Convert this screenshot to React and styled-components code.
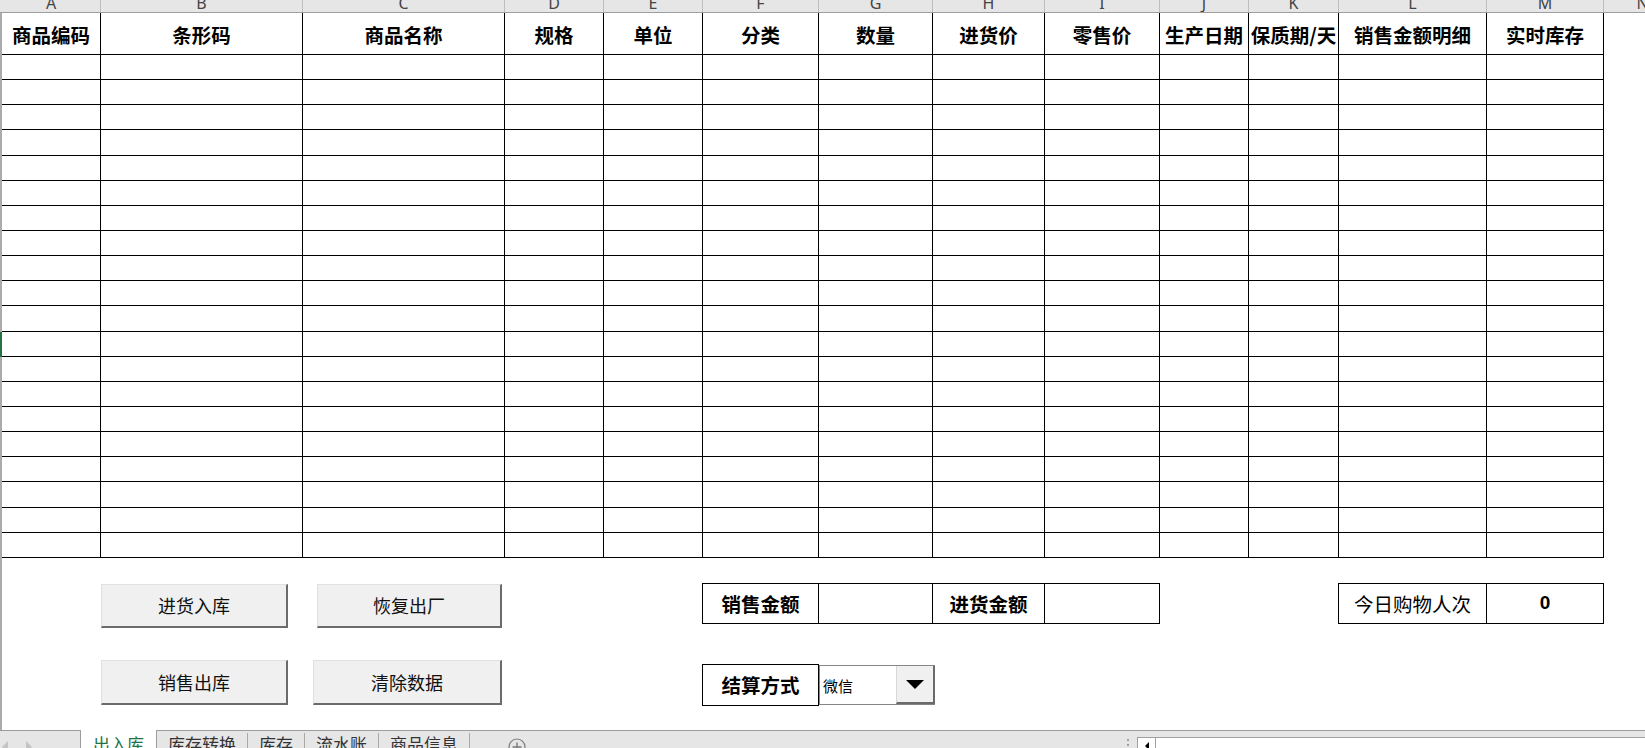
import React from "react"
import styled, { createGlobalStyle, css } from "styled-components"

const GlobalStyle = createGlobalStyle`
  * { box-sizing: border-box; }
  html, body {
    margin: 0;
    padding: 0;
    background: #fff;
  }
  body {
    width: 1645px;
    height: 748px;
    overflow: hidden;
    font-family: "Noto Sans CJK SC", "Noto Sans", sans-serif;
    color: #000;
  }
`

const COLUMNS = [
  { letter: "A", width: 99, title: "商品编码" },
  { letter: "B", width: 202, title: "条形码" },
  { letter: "C", width: 202, title: "商品名称" },
  { letter: "D", width: 99, title: "规格" },
  { letter: "E", width: 99, title: "单位" },
  { letter: "F", width: 116, title: "分类" },
  { letter: "G", width: 114, title: "数量" },
  { letter: "H", width: 112, title: "进货价" },
  { letter: "I", width: 115, title: "零售价" },
  { letter: "J", width: 89, title: "生产日期" },
  { letter: "K", width: 90, title: "保质期/天" },
  { letter: "L", width: 148, title: "销售金额明细" },
  { letter: "M", width: 117, title: "实时库存" },
]

const TEMPLATE = COLUMNS.map((c) => `${c.width}px`).join(" ")
const ROWS = 20
const ACTIVE_ROW = 11

const Page = styled.div`
  display: flex;
  flex-direction: column;
  height: 748px;
  width: 1645px;
`

const ColumnBar = styled.div`
  display: flex;
  height: 13px;
  flex-shrink: 0;
  background: #e6e6e6;
  border-bottom: 1px solid #9e9e9e;
  overflow: hidden;
`

const Corner = styled.div`
  width: 2px;
  flex-shrink: 0;
`

const ColLetter = styled.div`
  width: ${(p) => p.$width}px;
  flex-shrink: 0;
  border-right: 1px solid #bfbfbf;
  text-align: center;
  font-family: "Noto Sans", "Liberation Sans", sans-serif;
  font-size: 16px;
  line-height: 7px;
  color: #444;
`

const Sheet = styled.div`
  flex: 1;
  display: flex;
  flex-direction: column;
  border-left: 2px solid #ababab;
`

const Table = styled.div`
  display: grid;
  grid-template-columns: ${TEMPLATE};
  grid-template-rows: 42px repeat(${ROWS}, 25.15px);
`

const HeadCell = styled.div`
  border-right: 1px solid #000;
  border-bottom: 1px solid #000;
  display: flex;
  align-items: center;
  justify-content: center;
  padding-top: 2px;
  font-size: 19.5px;
  font-weight: 700;
  white-space: nowrap;
  overflow: hidden;
`

const DataCell = styled.div`
  border-right: 1px solid #000;
  border-bottom: 1px solid #000;
  ${(p) =>
    p.$active &&
    css`
      box-shadow: -2px 0 0 #217346;
    `}
`

const Lower = styled.div`
  display: grid;
  grid-template-columns: ${TEMPLATE};
  grid-template-rows: 25px 41px 40px 42px;
`

const ButtonPanel = styled.div`
  grid-column: 2 / 4;
  grid-row: 1 / -1;
  display: grid;
  grid-template-columns: 187px 189px;
  grid-template-rows: 44px 45px;
  column-gap: 25px;
  row-gap: 32px;
  padding-top: 26px;
  align-content: start;
`

const MacroButton = styled.div`
  width: ${(p) => p.$width || 187}px;
  justify-self: end;
  background: #f0f0f0;
  border-top: 1px solid #e0e0e0;
  border-left: 1px solid #e0e0e0;
  border-right: 2px solid #6b6b6b;
  border-bottom: 2px solid #6b6b6b;
  display: flex;
  align-items: center;
  justify-content: center;
  font-size: 18px;
  color: #111;
`

const Box = styled.div`
  grid-column: ${(p) => p.$col};
  grid-row: ${(p) => p.$row};
  border: 1px solid #000;
  border-left-width: ${(p) => (p.$first ? "1px" : "0")};
  margin-left: ${(p) => (p.$first ? "-1px" : "0")};
  display: flex;
  align-items: center;
  justify-content: center;
  font-size: 19.5px;
  font-weight: ${(p) => p.$weight || 700};
  white-space: nowrap;
`

const Number = styled.span`
  font-family: "Liberation Sans", sans-serif;
  font-size: 19px;
  font-weight: 700;
`

const Combo = styled.div`
  grid-column: 7;
  grid-row: 4;
  width: 116px;
  margin: 1px 0;
  display: flex;
  background: #fff;
  border: 1px solid #858585;
  border-right: none;
`

const ComboText = styled.div`
  flex: 1;
  display: flex;
  align-items: center;
  padding-left: 3px;
  padding-top: 1px;
  font-size: 15px;
`

const ComboButton = styled.div`
  width: 39px;
  background: #f0f0f0;
  border-left: 1px solid #d8d8d8;
  border-right: 2px solid #6b6b6b;
  border-bottom: 2px solid #6b6b6b;
  display: flex;
  align-items: center;
  justify-content: center;
`

const DownArrow = styled.span`
  width: 0;
  height: 0;
  border-left: 9.5px solid transparent;
  border-right: 9.5px solid transparent;
  border-top: 9px solid #000;
  margin-top: 2px;
`

const TabBar = styled.div`
  height: 18px;
  flex-shrink: 0;
  display: flex;
  background: #e6e6e6;
  border-top: 1px solid #9c9c9c;
`

const TabNav = styled.div`
  width: 80px;
  display: flex;
  gap: 18px;
  padding: 10px 0 0 2px;
`

const NavArrow = styled.span`
  width: 0;
  height: 0;
  border-top: 6px solid transparent;
  border-bottom: 6px solid transparent;
  ${(p) =>
    p.$dir === "left"
      ? css`
          border-right: 6px solid #c4c4c4;
        `
      : css`
          border-left: 6px solid #c4c4c4;
        `}
`

const Tab = styled.div`
  padding: 1px 11px 0;
  margin-top: 2px;
  font-size: 17px;
  line-height: 20px;
  color: #333;
  white-space: nowrap;
  border-right: 1px solid #a8a8a8;
  ${(p) =>
    p.$active &&
    css`
      margin-top: -1px;
      padding: 4px 12px 0;
      background: #fff;
      color: #217346;
      border-left: 1px solid #9c9c9c;
      border-right: 1px solid #9c9c9c;
    `}
`

const AddSheet = styled.svg`
  margin: 7px 0 0 38px;
  flex-shrink: 0;
`

const Spacer = styled.div`
  flex: 1;
`

const Dots = styled.div`
  width: 19px;
  display: flex;
  flex-direction: column;
  align-items: center;
  gap: 3px;
  padding-top: 8px;

  span {
    width: 2px;
    height: 2px;
    background: #a0a0a0;
  }
`

const HScroll = styled.div`
  width: 508px;
  margin-top: 6px;
  background: #fff;
  border-top: 1px solid #a0a0a0;
  border-left: 1px solid #a0a0a0;
  display: flex;
`

const ScrollArrow = styled.div`
  width: 18px;
  border-right: 1px solid #a0a0a0;
  display: flex;
  justify-content: center;
  padding-top: 4px;

  &::before {
    content: "";
    width: 0;
    height: 0;
    border-top: 4px solid transparent;
    border-bottom: 4px solid transparent;
    border-right: 4px solid #000;
  }
`

const TABS = ["出入库", "库存转换", "库存", "流水账", "商品信息"]

export default function App() {
  return (
    <Page>
      <GlobalStyle />
      <ColumnBar>
        <Corner />
        {COLUMNS.map((c) => (
          <ColLetter key={c.letter} $width={c.width}>
            {c.letter}
          </ColLetter>
        ))}
        <ColLetter $width={78}>N</ColLetter>
      </ColumnBar>

      <Sheet>
        <Table>
          {COLUMNS.map((c) => (
            <HeadCell key={c.letter}>{c.title}</HeadCell>
          ))}
          {Array.from({ length: ROWS }).map((_, r) =>
            COLUMNS.map((c, i) => (
              <DataCell key={`${r}-${c.letter}`} $active={r === ACTIVE_ROW && i === 0} />
            ))
          )}
        </Table>

        <Lower>
          <ButtonPanel>
            <MacroButton>进货入库</MacroButton>
            <MacroButton $width={185}>恢复出厂</MacroButton>
            <MacroButton>销售出库</MacroButton>
            <MacroButton $width={189}>清除数据</MacroButton>
          </ButtonPanel>

          <Box $col={6} $row={2} $first>销售金额</Box>
          <Box $col={7} $row={2} />
          <Box $col={8} $row={2}>进货金额</Box>
          <Box $col={9} $row={2} />

          <Box $col={12} $row={2} $first $weight={400}>今日购物人次</Box>
          <Box $col={13} $row={2}>
            <Number>0</Number>
          </Box>

          <Box $col={6} $row={4} $first>结算方式</Box>
          <Combo>
            <ComboText>微信</ComboText>
            <ComboButton>
              <DownArrow />
            </ComboButton>
          </Combo>
        </Lower>
      </Sheet>

      <TabBar>
        <TabNav>
          <NavArrow $dir="left" />
          <NavArrow $dir="right" />
        </TabNav>
        {TABS.map((t, i) => (
          <Tab key={t} $active={i === 0}>
            {t}
          </Tab>
        ))}
        <AddSheet width="18" height="18" viewBox="0 0 18 18">
          <circle cx="9" cy="9" r="8" fill="none" stroke="#7a7a7a" strokeWidth="1.2" />
          <path d="M9 4.5v9M4.5 9h9" stroke="#7a7a7a" strokeWidth="1.4" />
        </AddSheet>
        <Spacer />
        <Dots>
          <span />
          <span />
        </Dots>
        <HScroll>
          <ScrollArrow />
        </HScroll>
      </TabBar>
    </Page>
  )
}
